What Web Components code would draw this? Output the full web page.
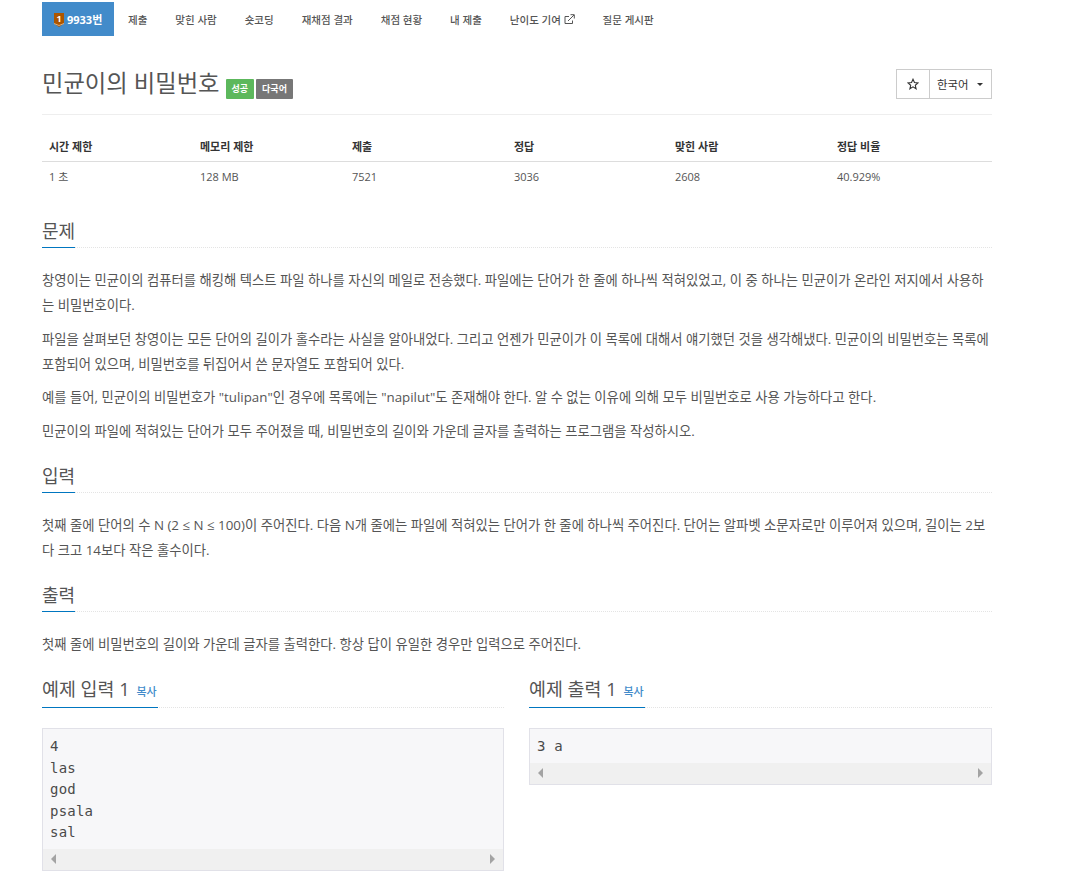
<!DOCTYPE html>
<html lang="ko">
<head>
<meta charset="utf-8">
<title>민균이의 비밀번호</title>
<style>
  html, body { margin: 0; background: #fff; }
  body {
    font-family: "Open Sans", "Noto Sans CJK KR", sans-serif;
    font-size: 13px;
    color: #555;
    overflow: hidden;
  }
</style>
</head>
<body>
<problem-page>
  <problem-nav></problem-nav>
  <problem-title>민균이의 비밀번호</problem-title>
  <problem-stats></problem-stats>

  <problem-section heading="문제">
    <p>창영이는 민균이의 컴퓨터를 해킹해 텍스트 파일 하나를 자신의 메일로 전송했다. 파일에는 단어가 한 줄에 하나씩 적혀있었고, 이 중 하나는 민균이가 온라인 저지에서 사용하는 비밀번호이다.</p>
    <p>파일을 살펴보던 창영이는 모든 단어의 길이가 홀수라는 사실을 알아내었다. 그리고 언젠가 민균이가 이 목록에 대해서 얘기했던 것을 생각해냈다. 민균이의 비밀번호는 목록에 포함되어 있으며, 비밀번호를 뒤집어서 쓴 문자열도 포함되어 있다.</p>
    <p>예를 들어, 민균이의 비밀번호가 "tulipan"인 경우에 목록에는 "napilut"도 존재해야 한다. 알 수 없는 이유에 의해 모두 비밀번호로 사용 가능하다고 한다.</p>
    <p>민균이의 파일에 적혀있는 단어가 모두 주어졌을 때, 비밀번호의 길이와 가운데 글자를 출력하는 프로그램을 작성하시오.</p>
  </problem-section>
  <problem-section heading="입력">
    <p>첫째 줄에 단어의 수 N (2 ≤ N ≤ 100)이 주어진다. 다음 N개 줄에는 파일에 적혀있는 단어가 한 줄에 하나씩 주어진다. 단어는 알파벳 소문자로만 이루어져 있으며, 길이는 2보다 크고 14보다 작은 홀수이다.</p>
  </problem-section>
  <problem-section heading="출력">
    <p>첫째 줄에 비밀번호의 길이와 가운데 글자를 출력한다. 항상 답이 유일한 경우만 입력으로 주어진다.</p>
  </problem-section>

  <sample-row>
    <sample-box heading="예제 입력 1">4
las
god
psala
sal</sample-box>
    <sample-box heading="예제 출력 1">3 a</sample-box>
  </sample-row>
</problem-page>

<script>
class ProblemPage extends HTMLElement {
  constructor() {
    super();
    this.attachShadow({ mode: 'open' });
    this.shadowRoot.innerHTML = `
      <style>
        :host { display: block; width: 950px; margin-left: 42px; }
      </style>
      <slot></slot>
    `;
  }
}

class ProblemNav extends HTMLElement {
  constructor() {
    super();
    this.attachShadow({ mode: 'open' });
    const tabs = ['제출', '맞힌 사람', '숏코딩', '재채점 결과', '채점 현황', '내 제출'];
    this.shadowRoot.innerHTML = `
      <style>
        :host { display: flex; padding-top: 2px; height: 34px; font-size: 10.5px; font-weight: 500; color: #555; }
        a { display: flex; align-items: center; padding: 0 14px; white-space: nowrap; }
        a:nth-child(2) { padding-left: 15px; }
        a.active { background: #428bca; color: #fff; padding: 0 12px; width: 48px; gap: 3px; font-weight: 700; font-size: 11px; }
        a.active svg { margin-top: 2px; }
        svg { flex: none; }
      </style>
      <a class="active">
        <svg width="10" height="14" viewBox="0 0 10 14">
          <path d="M0 0H10V10.5L5 14L0 10.5Z" fill="#ad5600"/>
          <path d="M0 10.5L5 12.5L10 10.5" fill="none" stroke="#e8c49a" stroke-width=".8"/>
          <text x="5" y="9" font-size="9" font-family="Open Sans" font-weight="700" text-anchor="middle" fill="#fff">1</text>
        </svg>9933번</a>
      ${tabs.map(t => `<a>${t}</a>`).join('')}
      <a>난이도 기여&nbsp;<svg width="11" height="11" viewBox="0 0 11 11" fill="none" stroke="#555" stroke-width="1">
        <path d="M8.5 6.5V9.5H1V2.5H5"/><path d="M4 7L10 1M6.5.7H10.3V4.5"/></svg></a>
      <a>질문 게시판</a>
    `;
  }
}

class ProblemTitle extends HTMLElement {
  constructor() {
    super();
    this.attachShadow({ mode: 'open' });
    this.shadowRoot.innerHTML = `
      <style>
        :host { display: flex; align-items: flex-start; justify-content: space-between; margin-top: 33px; height: 45px; border-bottom: 1px solid #eee; }
        .left { display: flex; align-items: flex-start; height: 29px; }
        h1 { margin: 0; font-size: 23.3px; font-weight: 400; color: #555; line-height: 29px; }
        .badge { display: block; margin-top: 10px; height: 20px; line-height: 20px; padding: 0 6px; font-size: 9px; font-weight: 700; color: #fff; border-radius: 1px; }
        .ok { background: #5cb85c; margin-left: 6px; }
        .multi { background: #777; margin-left: 2px; }
        .btns { display: flex; height: 30px; box-sizing: border-box; border: 1px solid #ccc; font-size: 11.4px; color: #333; }
        .star { width: 32px; display: flex; align-items: center; justify-content: center; border-right: 1px solid #ccc; }
        .lang { flex: 1; width: 61px; box-sizing: border-box; display: flex; align-items: center; padding-left: 7px; gap: 9px; }
        .caret { width: 0; height: 0; border: 3px solid transparent; border-top-color: #333; border-bottom: 0; margin-top: 1px; }
      </style>
      <div class="left">
        <h1><slot></slot></h1>
        <span class="badge ok">성공</span>
        <span class="badge multi">다국어</span>
      </div>
      <div class="btns">
        <span class="star"><svg width="12" height="12" viewBox="0 0 24 24" fill="none" stroke="#333" stroke-width="2.2" stroke-linejoin="miter">
          <path d="M12 2.5L14.9 9.1L22 9.8L16.6 14.5L18.2 21.5L12 17.8L5.8 21.5L7.4 14.5L2 9.8L9.1 9.1Z"/></svg></span>
        <span class="lang">한국어<span class="caret"></span></span>
      </div>
    `;
  }
}

class ProblemStats extends HTMLElement {
  constructor() {
    super();
    this.attachShadow({ mode: 'open' });
    const rows = [
      ['시간 제한', '1 초'], ['메모리 제한', '128 MB'], ['제출', '7521'],
      ['정답', '3036'], ['맞힌 사람', '2608'], ['정답 비율', '40.929%']
    ];
    this.shadowRoot.innerHTML = `
      <style>
        :host { display: grid; grid-template-columns: 151px 152px 162px 161px 162px 162px; margin: 17px 0 21px; font-size: 11px; color: #555; }
        div { padding: 0 7px; height: 30px; line-height: 30px; white-space: nowrap; box-sizing: border-box; }
        .h { font-weight: 700; color: #333; border-bottom: 1px solid #ddd; }
      </style>
      ${rows.map(r => `<div class="h">${r[0]}</div>`).join('')}
      ${rows.map(r => `<div>${r[1]}</div>`).join('')}
    `;
  }
}

// headline with a short blue rule sitting on a dotted line
class ProblemHeadline extends HTMLElement {
  constructor() {
    super();
    this.attachShadow({ mode: 'open' });
    this.shadowRoot.innerHTML = `
      <style>
        :host { display: flex; align-items: flex-end; border-bottom: 1px dotted #e4e4e4; height: 34px; }
        h2 { margin: 0 0 -1px; padding-bottom: var(--headline-pad, 1px); font-size: 18px; line-height: 30px; font-weight: 400; color: #555; border-bottom: 1px solid #0076c0; white-space: nowrap; }
      </style>
      <h2><slot></slot></h2>
    `;
  }
}

class ProblemSection extends HTMLElement {
  constructor() {
    super();
    this.attachShadow({ mode: 'open' });
    this.shadowRoot.innerHTML = `
      <style>
        :host { display: block; margin-top: 14px; }
        .body { margin-top: 20px; line-height: 25px; font-size: 13.33px; word-break: break-all; }
        ::slotted(p) { margin: 0 0 8.6px; }
      </style>
      <problem-headline>${this.getAttribute('heading')}</problem-headline>
      <div class="body"><slot></slot></div>
    `;
  }
}

class SampleRow extends HTMLElement {
  constructor() {
    super();
    this.attachShadow({ mode: 'open' });
    this.shadowRoot.innerHTML = `
      <style>
        :host { display: grid; grid-template-columns: 462px 463px; column-gap: 25px; align-items: start; margin-top: 16.4px; }
      </style>
      <slot></slot>
    `;
  }
}

class SampleBox extends HTMLElement {
  constructor() {
    super();
    this.attachShadow({ mode: 'open' });
    this.shadowRoot.innerHTML = `
      <style>
        :host { display: block; --headline-pad: 0px; }
        .copy { font-size: 11px; font-weight: 500; color: #428bca; margin-left: 2px; padding-right: 1px; }
        .title { font-size: 18.4px; }
        .pre { margin-top: 20px; border: 1px solid #e1e1e8; background: #f7f7f9; }
        pre { margin: 0; padding: 7px 7px 5px; font: 14px/21.5px "DejaVu Sans Mono", monospace; color: #4a4a4a; letter-spacing: .2px; }
        .bar { height: 21px; background: #f0f0f0; display: flex; align-items: center; justify-content: space-between; padding: 0 8px; }
        .l, .r { width: 0; height: 0; border: 5px solid transparent; }
        .l { border-left: 0; border-right-color: #a3a3a3; }
        .r { border-right: 0; border-left-color: #a3a3a3; }
      </style>
      <problem-headline><span class="title">${this.getAttribute('heading')}</span> <span class="copy">복사</span></problem-headline>
      <div class="pre">
        <pre><slot></slot></pre>
        <div class="bar"><span class="l"></span><span class="r"></span></div>
      </div>
    `;
  }
}

customElements.define('problem-page', ProblemPage);
customElements.define('problem-nav', ProblemNav);
customElements.define('problem-title', ProblemTitle);
customElements.define('problem-stats', ProblemStats);
customElements.define('problem-headline', ProblemHeadline);
customElements.define('problem-section', ProblemSection);
customElements.define('sample-row', SampleRow);
customElements.define('sample-box', SampleBox);
</script>
</body>
</html>
